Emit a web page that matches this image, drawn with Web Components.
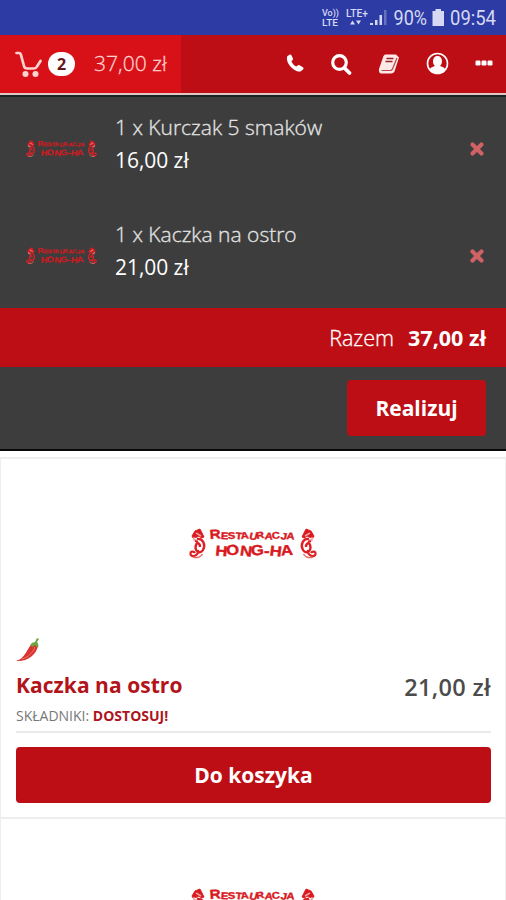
<!DOCTYPE html>
<html lang="pl">
<head>
<meta charset="utf-8">
<title>Restauracja Hong-Ha</title>
<style>
body{margin:0;width:506px;height:900px;overflow:hidden;background:#fff;font-family:"Open Sans","Noto Sans",sans-serif}
</style>
</head>
<body>
<restaurant-app></restaurant-app>
<script>
const define=(name,html)=>{
  const t=document.createElement('template');
  t.innerHTML=html;
  customElements.define(name,class extends HTMLElement{
    constructor(){super();this.attachShadow({mode:'open'}).append(t.content.cloneNode(true));}
  });
};

const dragon=`
<path d="M3 8L6 3L11 1L15 9L12.500 10L10 8L8 9L4 10Z" fill="#d81a1f"/>
<path d="M7 5L12 8M5 9L5 12L9 12" stroke-width="1.500" stroke="#f3a0a0"/>
<path d="M8 11C14 10 17 17 14 22C11 27 5 23 7 17C8 14 11 15 11 19" stroke-width="2.400"/>
<path d="M6 13L9 14M9 22C10 28 2 30 1.500 26C1 23 5 23 6 25" stroke-width="2.200"/>
<path d="M4 29C8 30.500 12 29 13.500 26" stroke="#ea6b6b" stroke-width="1.500"/>`;

define('restaurant-logo',`
<style>
:host{display:block;width:128px;height:32px}
svg{display:block;width:100%;height:100%;overflow:visible}
text{font-family:"Liberation Sans",sans-serif;font-weight:700;fill:currentColor;stroke:currentColor;stroke-width:.4}
:host([top]) .second{display:none}
</style>
<svg viewBox="0 0 128 32">
<g fill="none" stroke="#de2025" stroke-width="1">${dragon}</g>
<g transform="translate(128 0) scale(-1 1)" fill="none" stroke="#de2025" stroke-width="1">${dragon}</g>
<text transform="translate(21 11) scale(1.170 1)" textLength="72" lengthAdjust="spacing" rotate="-4 3 -3 4 -5 12 -10 6 -6 10 5"><tspan font-size="13">R</tspan><tspan font-size="9.500">ESTAURACJA</tspan></text>
<text class="second" transform="translate(26 27.500) scale(1.150 1)" font-size="14.500" textLength="68" lengthAdjust="spacing" rotate="5 -6 7 -4 0 6 -4">HONG-HA</text>
</svg>`);

define('phone-status',`
<style>
:host{display:flex;height:35px;background:#2d3ba5;color:#d5d9f4;box-sizing:border-box}
svg{display:block;width:506px;height:35px}
text{font-family:Roboto,sans-serif;fill:currentColor}
</style>
<svg viewBox="0 0 506 35">
<g font-size="10" font-weight="500"><text x="322" y="16" font-size="8.500" textLength="17" lengthAdjust="spacingAndGlyphs">Vo))</text>
<text x="322" y="26" font-size="9.500" textLength="16" lengthAdjust="spacingAndGlyphs">LTE</text>
<text x="346" y="17" textLength="22" lengthAdjust="spacingAndGlyphs">LTE+</text></g>
<g fill="currentColor"><path d="M350 24.500L352.500 20.500L355 24.500ZM356 20.500H361L358.500 24.500Z"/>
<path d="M370 25h3v-2h-3zM375 25h2.500v-5h-2.500zM379.500 25h2.500v-10h-2.500z"/><path d="M384 25h2.500v-15h-2.500z" opacity=".35"/>
<path d="M435.500 9h5.500v2h3v15h-11.500V11h3z"/></g>
<text x="393.500" y="25" font-size="19.500" textLength="33.500" lengthAdjust="spacingAndGlyphs">90%</text>
<text x="450" y="25" font-size="19.500" textLength="46" lengthAdjust="spacingAndGlyphs">09:54</text>
</svg>`);

define('top-bar',`
<style>
:host{display:flex;height:62px;box-sizing:border-box;background:#be0e15;border-bottom:2px solid #172522;color:#fff}
div{display:flex;align-items:center;height:58px;border-bottom:2px solid #dfc8c5}
.cart{width:181px;background:#d81119}
.cart svg{margin-left:15px;width:28px;height:28px}
b{margin-left:5px;width:27px;height:24px;line-height:24px;border-radius:12px;background:#fff;color:#641719;font-size:16px;text-align:center}
.sum{margin:-2px 0 0 19px;font-weight:300;font-size:21px;color:#ffd2cf;white-space:nowrap;letter-spacing:.05px;-webkit-text-stroke:.3px}
.nav{flex:1}
.nav svg{width:100%;height:58px}
</style>
<div class="cart"><svg viewBox="0 0 28 28" fill="none" stroke="#ffd2cf" stroke-width="2.700" stroke-linecap="round" stroke-linejoin="round"><path d="M1.500 3H4Q5.500 3 6 5L9 16Q9.500 18.500 12 18.500H19Q21 18.500 22 16.500L25.500 11"/><circle cx="10.500" cy="24" r="1.700" fill="#ffd2cf"/><circle cx="20.500" cy="24" r="1.700" fill="#ffd2cf"/></svg><b>2</b><span class="sum">37,00 zł</span></div>
<div class="nav"><svg viewBox="181 35 325 58">
<path fill="#fff" d="M290 54.500L287.500 56C284.500 62 294 72.500 300.500 71.500L303 69.500C304 68.500 303.500 67.500 302.500 67L299.500 65.200C298 64.500 297 66.500 296 66.500C294 65.500 292.500 63.500 291.500 61.500C291.500 60.500 293.500 60 293 58.500L291.500 55.500Q291 54 290 54.500Z"/>
<circle cx="339.500" cy="62.500" r="6.800" fill="none" stroke="#fff" stroke-width="3.200"/><path d="M344.500 68L349.500 73" stroke="#fff" stroke-width="3.800" stroke-linecap="round"/>
<path d="M385 54.500H396L399 57.500L394.500 71.500Q393.500 73.500 391 73.500H381Q378.500 73 379 69L383.500 56Z" fill="#ffe9e7"/><path d="M397 58L392.500 69Q392 70.500 390 70.500H381.500" stroke="#b8484b" stroke-width="1.200" fill="none"/><path d="M386.500 58.500H393.500M385.500 61.500H392.500" stroke="#982125" stroke-width="1.400"/>
<circle cx="437.500" cy="63.500" r="10" fill="none" stroke="#fff" stroke-width="1.600"/><path d="M437.500 56C432 56 432 64 435 66C432 67 430 67.500 430 69.500C433.500 74.500 441.500 74.500 445 69.500C445 67.500 443 67 440 66C443 64 443 56 437.500 56Z" fill="#fff"/>
<g fill="#fff"><rect x="475.500" y="60.500" width="5" height="5" rx="1.200"/><rect x="481.500" y="60.500" width="5" height="5" rx="1.200"/><rect x="487.500" y="60.500" width="5" height="5" rx="1.200"/></g>
</svg></div>`);

define('basket-item',`
<style>
:host{display:flex;align-items:flex-start;height:107px;box-sizing:border-box;padding:14px 21px 0 26px;color:#e4e4e4}
restaurant-logo{width:71px;height:18px;margin-top:29px;color:#c81c22}
.info{margin-left:18px;flex:1;white-space:nowrap}
.name{font-weight:300;font-size:21px;line-height:32px;display:block;-webkit-text-stroke:.3px}
.price{font-size:21px;line-height:33px;display:block;color:#fff;letter-spacing:-.05px;padding-top:1px}
svg{width:16px;height:16px;margin-top:30px}
</style>
<restaurant-logo></restaurant-logo>
<div class="info"><span class="name"><slot name="name"></slot></span><span class="price"><slot name="price"></slot></span></div>
<svg viewBox="0 0 16 16"><path d="M3.500 3.500L12.500 12.500M12.500 3.500L3.500 12.500" stroke="#cf6264" stroke-width="4.200" stroke-linecap="round"/></svg>`);

define('action-button',`
<style>
:host{display:flex;align-items:center;justify-content:center;box-sizing:border-box;height:56px;border-radius:4px;background:#be0e15;color:#fff;font-weight:700;font-size:21px;white-space:nowrap}
</style><slot></slot>`);

define('basket-panel',`
<style>
:host{display:block;background:#3d3d3d;height:354px;box-sizing:border-box;border-bottom:2px solid #080808}
.items{height:211px}
.total{height:59px;box-sizing:border-box;background:#be0e15;display:flex;align-items:center;justify-content:flex-end;gap:14px;padding:0 20px 1px 0;color:#fff;font-size:21px}
.total span{font-weight:300;font-size:21.500px;-webkit-text-stroke:.3px}
.total b{font-size:21.500px}
.go{display:flex;justify-content:flex-end;padding:13px 20px 0 0}
action-button{width:139px}
</style>
<div class="items"><basket-item><span slot="name">1 x Kurczak 5 smaków</span><span slot="price">16,00 zł</span></basket-item><basket-item><span slot="name">1 x Kaczka na ostro</span><span slot="price">21,00 zł</span></basket-item></div>
<div class="total"><span>Razem</span><b>37,00 zł</b></div>
<div class="go"><action-button>Realizuj</action-button></div>`);

define('dish-card',`
<style>
:host{display:block;height:360px;box-sizing:border-box;border:solid #eee;border-width:2px 1px 0 1px;padding:0 14px 0 15px}
:host([peek]){height:83px;overflow:hidden}
:host([peek]) .details{display:none}
restaurant-logo{margin:69px 0 0 173px;color:#d81a1f}
.chili{display:block;margin:77px 0 0 -1px;width:26px;height:26px}
.row{display:flex;justify-content:space-between;align-items:center;height:36px;margin-top:4px;white-space:nowrap}
h2{margin:0;font-size:21px;color:#b2141a;letter-spacing:.04px}
.price{font-size:23.500px;font-weight:600;color:#4c4c4c;padding-top:3px;letter-spacing:.35px}
.ing{height:30px;line-height:26px;font-size:14px;color:#777;border-bottom:2px solid #eaeaea;box-sizing:border-box;white-space:nowrap}
.ing b{color:#ad1420;font-size:14px}
action-button{margin-top:14px}
</style>
<restaurant-logo></restaurant-logo>
<div class="details">
<svg class="chili" viewBox="0 0 26 26"><path d="M1 24C8 22 10 17 15 9L18 6L23 9C21 18 12 25 1 24Z" fill="#d9342f"/><path d="M7 22C14 20 18 15 20 10" stroke="#f0776a" fill="none"/><path d="M15 8Q17 5 20 5L22 1L24 2L22 5Q24 7 23 11L20 8L18 10Z" fill="#72a446"/></svg>
<div class="row"><h2><slot name="name"></slot></h2><span class="price"><slot name="price"></slot></span></div>
<div class="ing">SKŁADNIKI: <b>DOSTOSUJ!</b></div>
<action-button><slot name="action"></slot></action-button>
</div>`);

define('restaurant-app',`
<style>
:host{display:block;width:506px;height:900px;overflow:hidden}
main{padding-top:6px}
</style>
<phone-status></phone-status><top-bar></top-bar><basket-panel></basket-panel>
<main>
<dish-card><span slot="name">Kaczka na ostro</span><span slot="price">21,00 zł</span><span slot="action">Do koszyka</span></dish-card>
<dish-card peek></dish-card>
</main>`);
document.querySelector('restaurant-app').shadowRoot.querySelector('[peek]').shadowRoot.querySelector('restaurant-logo').setAttribute('top','');
</script>
</body>
</html>
